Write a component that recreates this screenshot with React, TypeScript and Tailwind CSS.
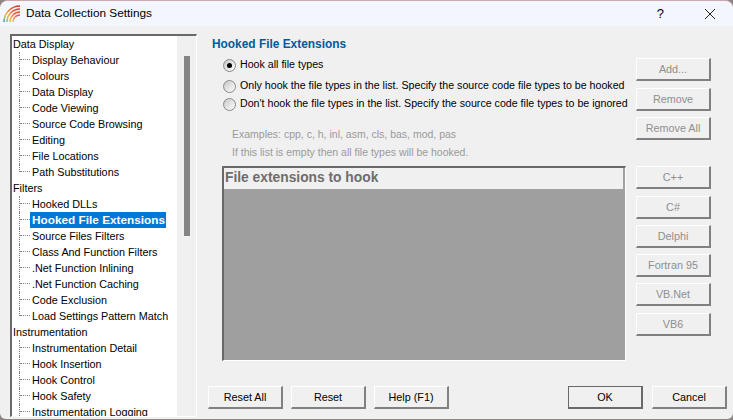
const font = "font-['Liberation_Sans',sans-serif]"

const tree = [
  {
    name: 'Data Display',
    items: ['Display Behaviour', 'Colours', 'Data Display', 'Code Viewing', 'Source Code Browsing', 'Editing', 'File Locations', 'Path Substitutions'],
  },
  {
    name: 'Filters',
    items: ['Hooked DLLs', 'Hooked File Extensions', 'Source Files Filters', 'Class And Function Filters', '.Net Function Inlining', '.Net Function Caching', 'Code Exclusion', 'Load Settings Pattern Match'],
  },
  {
    name: 'Instrumentation',
    items: ['Instrumentation Detail', 'Hook Insertion', 'Hook Control', 'Hook Safety', 'Instrumentation Logging'],
  },
]

function Logo() {
  return (
    <svg width="18" height="17" viewBox="0 0 18 17" fill="none" strokeWidth="1.4">
      <defs>
        <linearGradient id="rainbow" gradientUnits="userSpaceOnUse" x1="16" y1="0" x2="0" y2="16">
          <stop offset="0" stopColor="#d42a2a" />
          <stop offset="0.45" stopColor="#ee6a3a" />
          <stop offset="0.7" stopColor="#f5b13c" />
          <stop offset="0.85" stopColor="#9cc06a" />
          <stop offset="1" stopColor="#2f86dc" />
        </linearGradient>
      </defs>
      <path d="M1 17 A16 16 0 0 1 17 1" stroke="url(#rainbow)" />
      <path d="M4 17 A13 13 0 0 1 17 4" stroke="url(#rainbow)" />
      <path d="M7 17 A10 10 0 0 1 17 7" stroke="url(#rainbow)" />
      <path d="M10 17 A7 7 0 0 1 17 10" stroke="url(#rainbow)" />
    </svg>
  )
}

function TreeChild({ label, last }: { label: string; last: boolean }) {
  const selected = label === 'Hooked File Extensions'
  return (
    <div className="flex h-4 pl-[7px]">
      <div className={`w-[11px] shrink-0 border-l border-dotted border-[#808080] ${last ? 'h-2' : 'h-4'}`}>
        <div className="mt-[7px] border-t border-dotted border-[#808080]" />
      </div>
      <span
        className={`h-4 whitespace-nowrap pr-px pl-[2px] leading-4 ${selected ? 'bg-[#0078d7] text-[11.8px] font-bold text-white' : 'text-black'}`}
      >
        {label}
      </span>
    </div>
  )
}

function Radio({ checked, label }: { checked?: boolean; label: string }) {
  return (
    <div className="flex h-[18px] items-center gap-[4px]">
      <div className="flex h-[13px] w-[13px] shrink-0 items-center justify-center rounded-full border border-[#8a8a8a] bg-gradient-to-br from-[#c8c8c8] to-white">
        {checked && <div className="h-[5px] w-[5px] rounded-full bg-black" />}
      </div>
      <span className="whitespace-nowrap text-[10.65px] text-black">{label}</span>
    </div>
  )
}

function Btn({ label, disabled, primary, className = '' }: { label: string; disabled?: boolean; primary?: boolean; className?: string }) {
  return (
    <div
      className={`flex h-[23px] w-[75px] shrink-0 items-center justify-center border-t border-l bg-[#f0f0f0] ${
        primary
          ? 'border-[#696969] border-r-2 border-b-2 border-r-[#696969] border-b-[#696969]'
          : 'border-white border-r-2 border-b-2 border-r-[#808080] border-b-[#808080]'
      } ${disabled ? 'text-[#8f8f8f]' : 'text-black'} ${className}`}
    >
      {label}
    </div>
  )
}

export default function App() {
  return (
    <div className="h-[420px] w-[733px] bg-[#8f8587]">
      <div className={`${font} flex h-[419px] w-[733px] flex-col overflow-hidden rounded-t-lg rounded-b-md border-t border-[#c9a9a9] bg-[#f0f0f0] text-[10.8px]`}>
        <div className="flex h-[25px] shrink-0 items-center bg-[#f3f6fc] pl-[3px]">
          <Logo />
          <span className="ml-[5px] text-[11.8px] text-black">Data Collection Settings</span>
          <span className="ml-auto mr-[40px] text-[13px] text-black">?</span>
          <svg width="12" height="12" viewBox="0 0 12 12" className="mr-[17px]" stroke="#222" strokeWidth="1" fill="none">
            <path d="M1 1 L11 11 M11 1 L1 11" />
          </svg>
        </div>

        <div className="flex min-h-0 flex-1 pt-[8px] pl-[10px]">
          <div className="relative h-[383px] w-[187px] shrink-0 overflow-hidden border-t-2 border-r border-b border-l-2 border-t-[#696969] border-r-white border-b-white border-l-[#696969] bg-white">
            {tree.map((group) => (
              <div key={group.name}>
                <div className="h-4 pl-px leading-4 text-black">{group.name}</div>
                {group.items.map((item, i) => (
                  <TreeChild key={item + i} label={item} last={i === group.items.length - 1 && group.name !== 'Instrumentation'} />
                ))}
              </div>
            ))}
            <div className="absolute top-0 right-0 bottom-0 w-[19px] bg-[#f0f0f0]">
              <div className="mx-auto mt-[20px] h-[180px] w-[6px] bg-[#858585]" />
            </div>
          </div>

          <div className="flex min-w-0 flex-1 flex-col pl-[15px]">
            <div className="flex min-h-0 flex-1">
              <div className="w-[424px] shrink-0">
                <div className="mt-[2px] text-[11.9px] font-bold leading-4 text-[#005a9e]">Hooked File Extensions</div>
                <div className="mt-[4px] ml-[11px] flex flex-col">
                  <Radio checked label="Hook all file types" />
                  <div className="mt-[3px]">
                    <Radio label="Only hook the file types in the list. Specify the source code file types to be hooked" />
                  </div>
                  <Radio label="Don't hook the file types in the list. Specify the source code file types to be ignored" />
                </div>
                <div className="mt-[12px] ml-[20px] text-[10.5px] leading-[18px] text-[#9a9a9a]">
                  <div>Examples: cpp, c, h, inl, asm, cls, bas, mod, pas</div>
                  <div>If this list is empty then all file types will be hooked.</div>
                </div>
                <div className="mt-[5px] ml-[10px] h-[195px] w-[404px] border-t-2 border-r border-b border-l-2 border-t-[#696969] border-r-white border-b-white border-l-[#696969] bg-[#9f9f9f]">
                  <div className="flex h-[22px] items-start border-r-2 border-b border-[#a0a0a0] bg-[#f0f0f0] pl-[1px] text-[13.8px] font-bold leading-[20px] text-[#6d6d6d]">
                    File extensions to hook
                  </div>
                </div>
              </div>
              <div className="flex flex-col pt-[24px]">
                <Btn label="Add..." disabled />
                <Btn label="Remove" disabled className="mt-[7px]" />
                <Btn label="Remove All" disabled className="mt-[6px]" />
                <Btn label="C++" disabled className="mt-[26px]" />
                <Btn label="C#" disabled className="mt-[7px]" />
                <Btn label="Delphi" disabled className="mt-[6px]" />
                <Btn label="Fortran 95" disabled className="mt-[6px]" />
                <Btn label="VB.Net" disabled className="mt-[6px]" />
                <Btn label="VB6" disabled className="mt-[7px]" />
              </div>
            </div>
            <div className="mb-[10px] ml-[-4px] flex gap-2">
              <Btn label="Reset All" />
              <Btn label="Reset" />
              <Btn label="Help (F1)" />
              <Btn label="OK" primary className="ml-[111px]" />
              <Btn label="Cancel" className="ml-[1px]" />
            </div>
          </div>
        </div>
      </div>
    </div>
  )
}
